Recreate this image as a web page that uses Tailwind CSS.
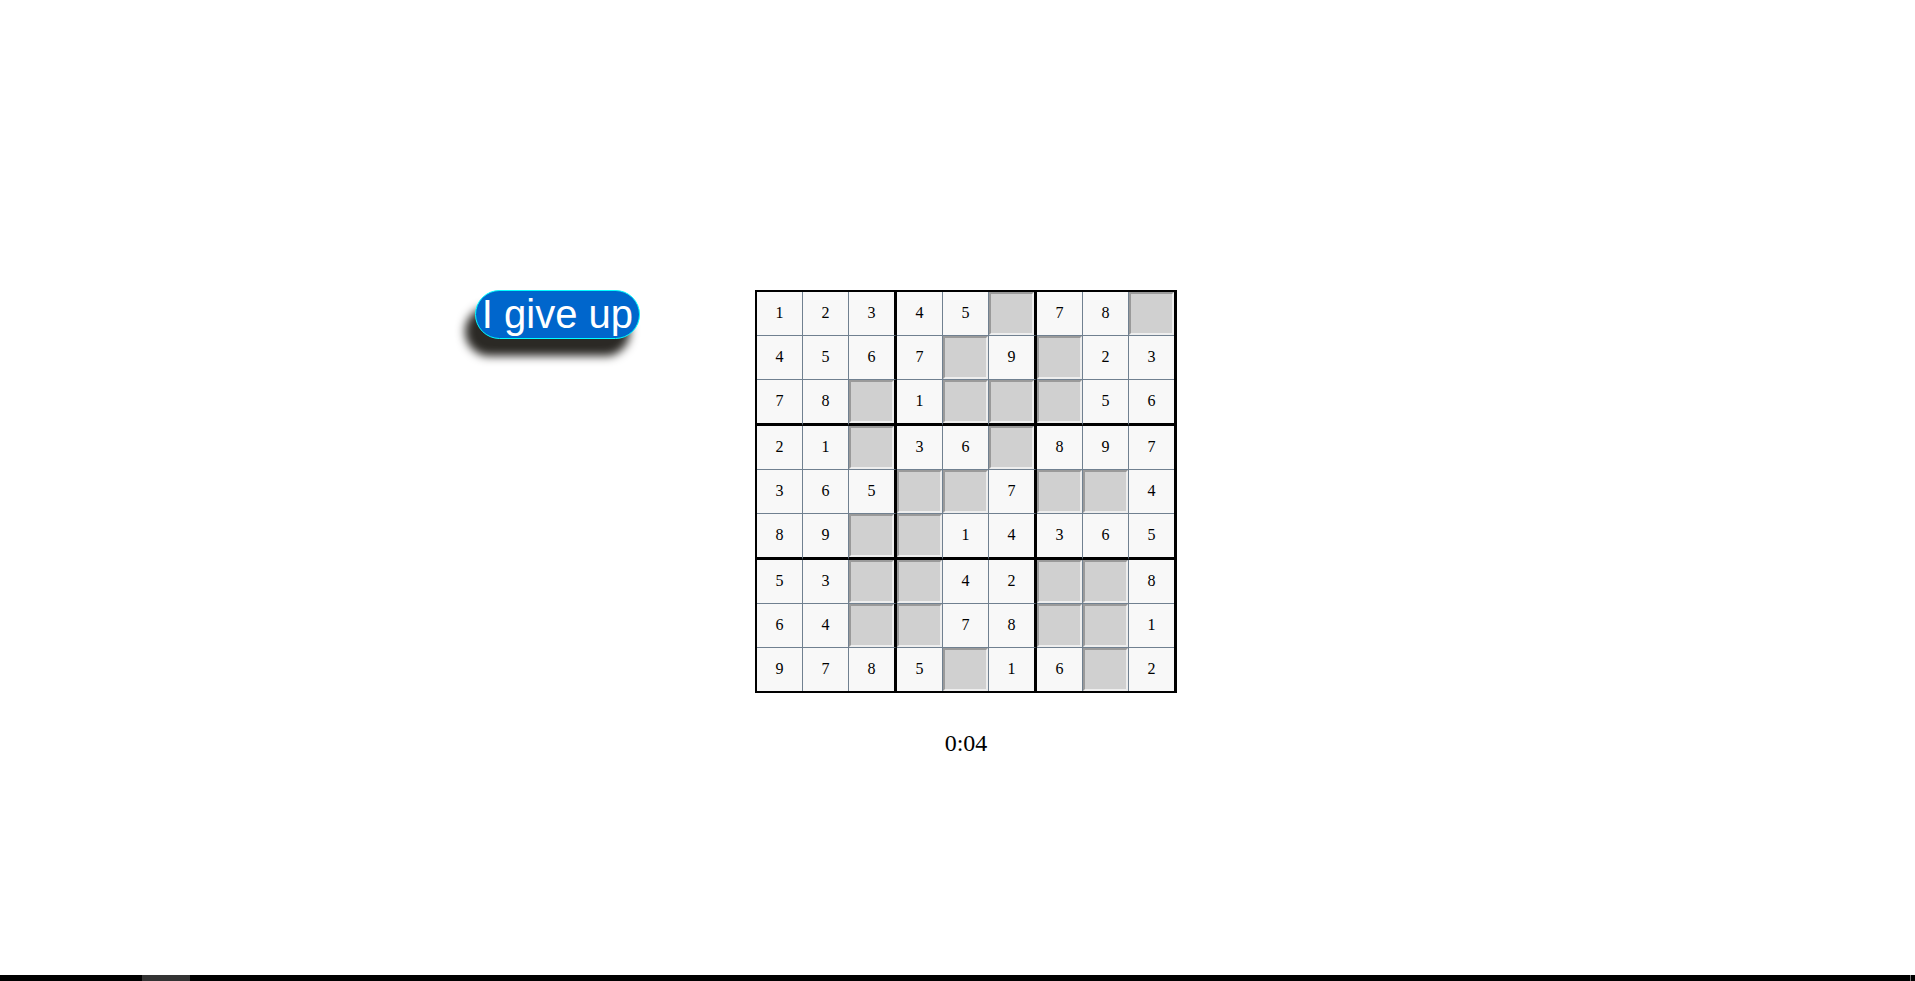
<!DOCTYPE html>
<html lang="en">
<head>
<meta charset="utf-8">
<title>Sudoku</title>
<script src="https://cdn.jsdelivr.net/npm/@tailwindcss/browser@4"></script>
</head>
<body class="flex min-h-screen flex-col bg-white font-['Liberation_Serif',serif] text-black">
<main class="flex grow items-start pt-[290px]">
  <div class="flex w-[755px] shrink-0 justify-end pr-[115px]">
    <button type="button" class="rounded-full border border-[#00ffff] bg-[#0066cc] px-[6px] font-['Liberation_Sans',sans-serif] text-[40px] leading-[47px] whitespace-nowrap text-white shadow-[-10px_17px_10px_#2b2925]">I give up</button>
  </div>
  <div class="flex flex-col items-center">
    <table class="border-separate border-spacing-0 border-2 border-r-3 border-black text-center text-base">
      <tbody id="board"></tbody>
    </table>
    <p class="mt-[34px] text-2xl leading-8">0:04</p>
  </div>
</main>
<footer class="flex h-[6px] justify-between bg-black">
  <div class="ml-[142px] w-12 bg-[#333333]"></div>
  <div class="mr-1 w-px bg-[#777777]"></div>
</footer>
<script>
const rows = ["12345.78.","4567.9.23","78.1...56","21.36.897","365..7..4","89..14365","53..42..8","64..78..1","9785.16.2"];
const board = document.getElementById("board");
rows.forEach((row, r) => {
  const tr = document.createElement("tr");
  [...row].forEach((value, c) => {
    const td = document.createElement("td");
    const right = c === 8 ? "" : c % 3 === 2 ? "border-r-3 border-r-black" : "border-r border-r-[#708090]";
    const bottom = r === 8 ? "" : r % 3 === 2 ? "border-b-3 border-b-black" : "border-b border-b-[#708090]";
    td.className = "bg-[#f8f8f8] p-0 " + right + " " + bottom;
    if (value === ".") {
      td.innerHTML = `<input type="text" maxlength="1" aria-label="Row ${r + 1}, column ${c + 1}" class="block h-[43px] w-[45px] border-2 border-t-[#9a9a9a] border-r-[#eeeeee] border-b-[#eeeeee] border-l-[#9a9a9a] bg-[#d0d0d0] text-center">`;
    } else {
      td.innerHTML = `<div class="h-[43px] w-[45px] leading-[41px]">${value}</div>`;
    }
    tr.append(td);
  });
  board.append(tr);
});
</script>
</body>
</html>
